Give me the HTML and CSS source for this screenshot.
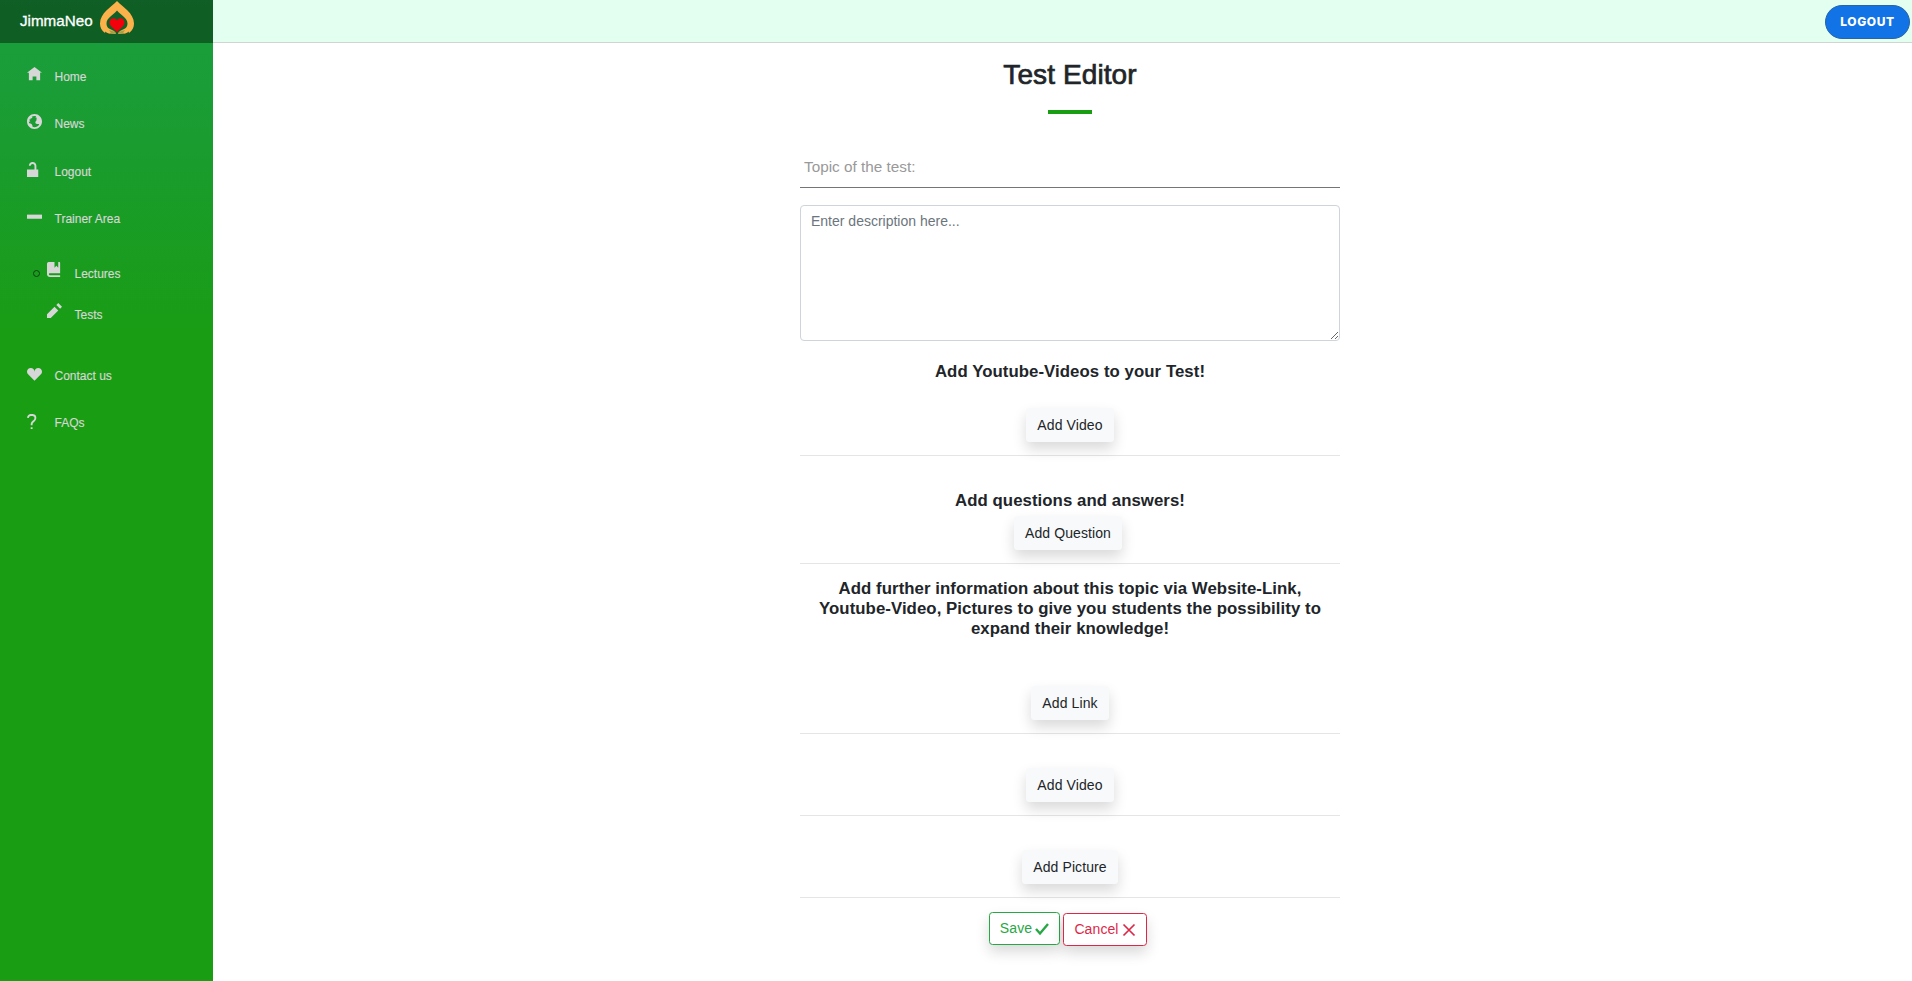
FILE: index.html
```html
<!DOCTYPE html>
<html lang="en">
<head>
<meta charset="utf-8">
<title>Test Editor</title>
<link rel="stylesheet" href="styles.css">
</head>
<body>
<div class="app">
  <aside class="sidebar">
    <div class="brand">
      <span>JimmaNeo</span>
      <svg class="logo" viewBox="0 0 34 34"><path fill="#fbb24a" d="M17 0C11.500 6 0 12 0 22.500c0 4 1.500 7 5 9.500l.5-1.500c1.500 1.700 3.500 2.500 6 2 2 .7 4.500.5 6-.5l-.5-3 -.5 3c1.500 1 3.500 1.200 6 .5 2.500.5 4.500-.3 6-2l.5 1.500c3.500-2.500 5-5.500 5-9.500C34 12 22.500 6 17 0z"/><path fill="#106127" d="M17 9.500C13 14 6.500 17 6.500 22.500c0 2.500 1 4 2.500 5l5 2.500 3 4 3-4 5-2.500c1.500-1 2.500-2.500 2.500-5C27.500 17 21 14 17 9.500z"/><path fill="#a3a04a" d="M9 29l6.500 2v1.500l-4 .5zM25 29l-6.500 2v1.500l4 .5z"/><path fill="#f2000c" d="M17 31L11 25.200c-4.500-4.700 1.500-11.200 6-6 4.500-5.200 10.500 1.300 6 6z"/></svg>
    </div>
    <nav class="nav">
      <a class="item"><svg viewBox="0 0 8 8"><path d="M4 0l-4 3h1v4h2v-2h2v2h2v-4.030l1 .03-4-3z"/></svg>Home</a>
      <a class="item"><svg viewBox="0 0 8 8"><path d="M4 0c-2.200 0-4 1.800-4 4s1.800 4 4 4 4-1.800 4-4-1.800-4-4-4zm0 1c.33 0 .64.090.94.190-.21.200-.45.380-.41.560.04.180.69.130.69.500 0 .270-.42.350-.13.660.35.350-.64.980-.66 1.440-.03.830.84.970 1.530.970.42 0 .53.200.5.440-.54.770-1.460 1.250-2.470 1.250-.38 0-.73-.090-1.060-.220.22-.440-.28-1.310-.75-1.590-.23-.230-.72-.140-1-.250-.09-.270-.18-.540-.19-.840.03-.050.08-.090.16-.090.19 0 .45.380.59.340.18-.040-.74-1.310-.31-1.560.2-.120.6.390.47-.160-.12-.510.36-.280.66-.410.26-.110.45-.410.13-.590-.06-.030-.13-.100-.22-.190.45-.270.97-.440 1.530-.440z"/></svg>News</a>
      <a class="item low"><svg viewBox="0 0 8 8"><path d="M3 0c-1.100 0-2 .9-2 2h1c0-.56.44-1 1-1s1 .44 1 1v2h-4v4h6v-4h-1v-2c0-1.100-.9-2-2-2z"/></svg>Logout</a>
      <a class="item"><svg viewBox="0 0 8 8"><path d="M0 3v2.200h8V3z"/></svg>Trainer Area</a>
      <div class="submenu">
        <a class="item dotted"><svg viewBox="0 0 8 8"><path d="M1 0c-.07 0-.13.01-.19.03-.39.08-.7.39-.78.78-.03.06-.03.12-.03.19v5.500c0 .83.67 1.500 1.500 1.500h5.500v-1h-5.500c-.28 0-.5-.22-.5-.5s.22-.5.5-.5h5.500v-5.500c0-.28-.22-.5-.5-.5h-.5v3l-1-1-1 1v-3h-3z"/></svg>Lectures</a>
        <a class="item"><svg viewBox="0 0 8 8"><path d="M6 0l-1 1 2 2 1-1-2-2zm-2 2l-4 4v2h2l4-4-2-2z"/></svg>Tests</a>
      </div>
      <a class="item"><svg viewBox="0 0 8 8"><path d="M2 1c-.55 0-1.040.23-1.410.59C.22 1.950 0 2.440 0 3c0 .55.23 1.040.59 1.410L4 7.810l3.410-3.400C7.780 4.040 8 3.550 8 3c0-.55-.23-1.040-.59-1.410C7.040 1.220 6.550 1 6 1c-.55 0-1.040.23-1.410.59C4.220 1.960 4 2.450 4 3c0-.55-.23-1.040-.59-1.410C3.040 1.220 2.550 1 2 1z"/></svg>Contact us</a>
      <a class="item"><svg viewBox="0 0 8 8"><path d="M2.470 0c-.85 0-1.480.26-1.880.66-.4.4-.54.9-.59 1.280l1 .13c.04-.25.12-.5.31-.69.19-.19.49-.38 1.160-.38.66 0 1.020.16 1.220.34.2.18.28.4.28.66 0 .83-.34 1.060-.84 1.500-.5.44-1.160 1.080-1.160 2.250v.25h1v-.25c0-.83.31-1.060.81-1.500.5-.44 1.190-1.080 1.190-2.250 0-.48-.17-1.020-.59-1.410-.43-.39-1.070-.59-1.910-.59zm-.5 7v1h1v-1h-1z"/></svg>FAQs</a>
    </nav>
  </aside>
  <div class="main">
    <header class="topbar"><button class="logout">LOGOUT</button></header>
    <main class="editor">
      <h1>Test Editor</h1>
      <div class="accent"></div>
      <input class="topic" placeholder="Topic of the test:">
      <textarea class="description" placeholder="Enter description here..."></textarea>
      <section class="block videos"><h2>Add Youtube-Videos to your Test!</h2><button class="btn">Add Video</button></section>
      <section class="block questions"><h2>Add questions and answers!</h2><button class="btn shift">Add Question</button></section>
      <section class="block further"><h2>Add further information about this topic via Website-Link, Youtube-Video, Pictures to give you students the possibility to expand their knowledge!</h2><button class="btn">Add Link</button></section>
      <section class="block"><button class="btn">Add Video</button></section>
      <section class="block"><button class="btn">Add Picture</button></section>
      <div class="actions">
        <button class="btn save">Save <svg viewBox="0 0 14 14"><path d="M1 7l4 4.500L13 2" fill="none" stroke="currentColor" stroke-width="2.400"/></svg></button>
        <button class="btn cancel">Cancel <svg viewBox="0 0 14 14"><path d="M1.500 1.500l11 11M12.500 1.500l-11 11" fill="none" stroke="currentColor" stroke-width="1.700"/></svg></button>
      </div>
    </main>
  </div>
</div>
</body>
</html>
```
FILE: styles.css
```css
* { box-sizing: border-box; }
body { margin: 0; font-family: "Liberation Sans", Arial, sans-serif; font-size: 14px; color: #212529; background: #fff; }
button, input, textarea { font: inherit; }
.app { display: flex; height: 981px; overflow: hidden; }
.sidebar { width: 213px; flex: none; background: linear-gradient(180deg, #1a9f40 0, #1a9c30 140px, #199d13 345px, #199d13 100%); }
.brand { display: flex; align-items: flex-start; gap: 7px; height: 43px; padding: 1px 0 0 20px; background: rgba(0, 0, 0, .4); color: #fff; font-size: 15.2px; line-height: 40px; -webkit-text-stroke: .3px #fff; }
.logo { width: 34px; height: 34px; }
.nav { display: flex; flex-direction: column; padding-top: 10px; }
.item { display: flex; align-items: center; gap: 12.5px; height: 47.3px; padding: 0 0 0 27px; color: #d7d7d7; font-size: 12px; -webkit-text-stroke: .15px #d7d7d7; }
.item svg { width: 15px; height: 15px; fill: #d7d7d7; stroke: none; margin-top: -4px; flex: none; }
.low { padding-top: 1px; }
.submenu { padding: 11px 0 17px 20px; }
.submenu .item { height: 41px; position: relative; }
.submenu svg { margin-top: -8px; }
.dotted::before { content: ""; position: absolute; left: 13px; top: 17px; width: 5px; height: 5px; border: 1.5px solid #123f16; border-radius: 50%; }
.main { flex: 1; min-width: 0; }
.topbar { display: flex; justify-content: flex-end; align-items: flex-start; height: 43px; padding: 5px 2px 0 0; background: #e3ffef; border-bottom: 1px solid #d0d5d3; }
.logout { width: 85px; height: 34px; padding: 0 0 1px; border: 1px solid #2a64a8; border-radius: 17px; background: #1173e6; color: #fff; font: 800 12px Inter, sans-serif; letter-spacing: .6px; }
.editor { width: 540px; margin-left: 587px; display: flex; flex-direction: column; align-items: center; }
h1 { margin: 15px 0 0; font-size: 28px; line-height: 34px; font-weight: 400; -webkit-text-stroke: .7px #212529; letter-spacing: .1px; }
.accent { width: 44px; height: 4px; margin-top: 18px; background: #199d13; }
.topic { width: 100%; height: 41px; margin-top: 33px; padding: 0 4px; border: 0; border-bottom: 1px solid #757575; border-radius: 0; font-size: 15.3px; }
.topic::placeholder { color: #999; }
.description { width: 100%; height: 136px; margin-top: 17px; padding: 5px 10px; border: 1px solid #ced4da; border-radius: 4px; line-height: 21px; display: block; resize: both; }
.description::placeholder { color: #6c757d; }
.block { display: flex; flex-direction: column; align-items: center; width: 100%; padding: 34px 0 13px; border-bottom: 1px solid #e5e5e5; }
h2 { margin: 0; padding: 0 14px; font-size: 16.8px; line-height: 20px; font-weight: 700; text-align: center; letter-spacing: .06px; }
.videos { padding-top: 21px; }
.videos h2 { margin-bottom: 26px; }
.questions { padding-top: 35px; }
.questions h2 { margin-bottom: 5px; }
.further { padding-top: 15px; }
.further h2 { margin-bottom: 47px; }
.btn { height: 34px; padding: 0 11px 1px; border: 0; border-radius: 3.5px; background: #f8f9fa; color: #212529; box-shadow: 0 7px 14px rgba(0, 0, 0, .15); white-space: nowrap; letter-spacing: .1px; }
.shift { margin-right: 4px; }
.actions { display: flex; gap: 3px; margin: 14px 4px 0 0; }
.save, .cancel { display: flex; align-items: center; justify-content: center; gap: 3px; height: 33px; background: #fff; border: 1px solid; padding: 0 0 2px; }
.save { width: 71px; color: #28a745; }
.cancel { width: 84px; color: #dc2848; margin-top: 1px; }
.actions svg { width: 14px; height: 14px; margin-top: 3px; }
```
